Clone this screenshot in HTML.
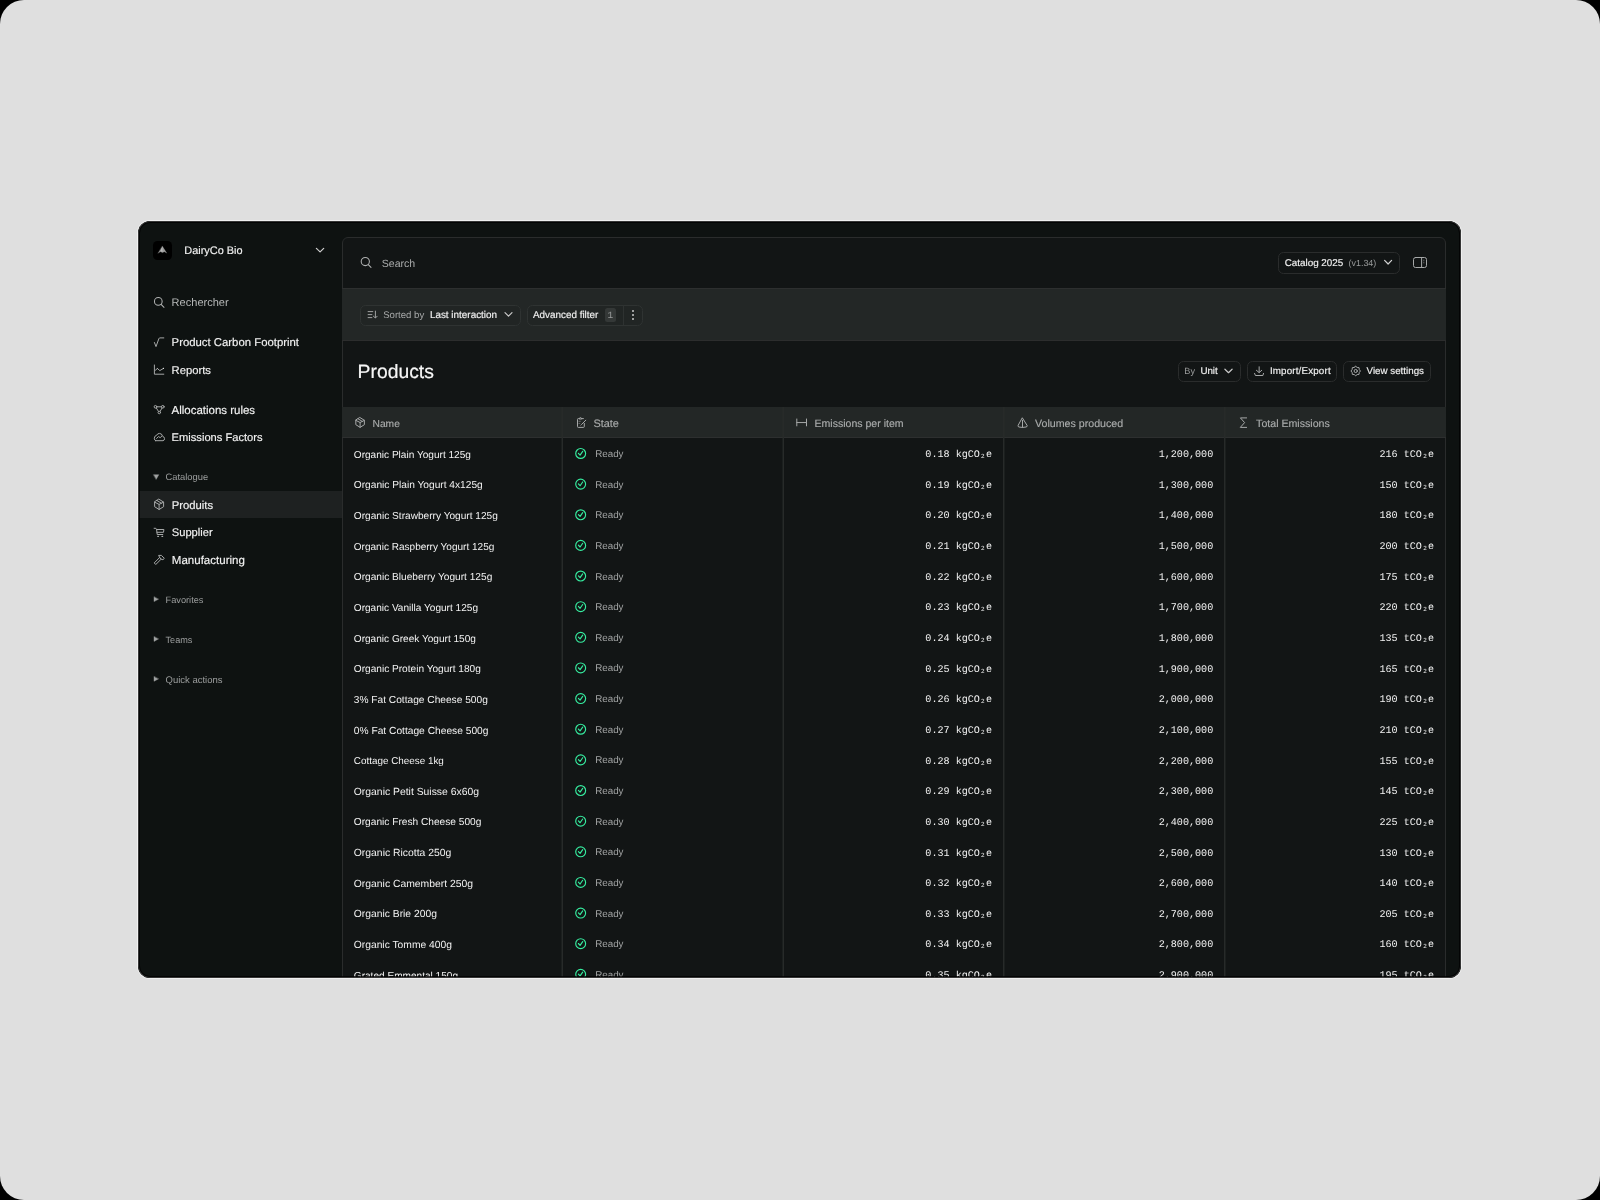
<!DOCTYPE html>
<html><head><meta charset="utf-8"><title>Products</title>
<style>
html,body{margin:0;padding:0;width:1600px;height:1200px;overflow:hidden;background:#000}
.bg{position:absolute;left:0;top:0;width:1600px;height:1200px;background:#dfdfdf;border-radius:24px;overflow:hidden}
.win{will-change:transform;position:absolute;left:138px;top:221px;width:1323px;height:757px;background:#0e1211;border-radius:12px;overflow:hidden;box-shadow:0 0 0 1px #f0f0f0}
.edge{position:absolute;left:0;top:0;width:1323px;height:757px;border-radius:12px;box-shadow:inset 0 0 0 1px rgba(60,60,60,0.9), inset 0 0 0 2px rgba(0,0,0,0.75);z-index:5}
.win > *{position:absolute}
.in{position:absolute;left:-138px;top:-221px;width:1600px;height:1200px}
.in > *{position:absolute}
.t{font-family:"Liberation Sans",sans-serif;white-space:nowrap;text-rendering:geometricPrecision}
.m{-webkit-text-stroke:0.15px currentColor}
.mono{font-family:"Liberation Mono",monospace}
.mb{}
.ic{overflow:visible}
.panel{background:#121515;border:1px solid #2a2c2c;border-radius:6px 6px 0 0;box-sizing:border-box}
.btn{border:1px solid #2a2c2c;border-radius:5.5px;box-sizing:border-box;background:#121515}
.btn2{border:1px solid #2f3332;border-radius:5.5px;box-sizing:border-box;background:#212524}
.dot{width:2.2px;height:2.2px;border-radius:50%;background:#c8c8c8}
</style></head>
<body>
<div class="bg">
<div class="win"><div class="in">
<div class="box" style="left:153px;top:241px;width:19px;height:19px;background:#000;border-radius:4.5px"></div>
<svg class="ic" style="left:155px;top:243px;width:15px;height:14px" viewBox="155 243 15 14" fill="none" stroke="#a6a8a8" stroke-width="1" stroke-linecap="round" stroke-linejoin="round"><path d="M162.45 246.3 L166.7 253.1 L164.5 251.7 L162.45 252.6 L160.4 251.7 L158.2 253.1 Z" fill="#9a9a9a" stroke="#9a9a9a" stroke-width="0.3"/><path d="M162.45 246.3 L160.6 250.6 L162.45 252.4 Z" fill="#b8b8b8" stroke="none"/></svg>
<div class="t m" style="left:184.3px;top:245px;font-size:10.93px;line-height:12px;color:#f2f2f2;">DairyCo Bio</div>
<svg class="ic" style="left:312px;top:244px;width:16px;height:12px" viewBox="312 244 16 12" fill="none" stroke="#c9c9c9" stroke-width="1.25" stroke-linecap="round" stroke-linejoin="round"><path d="M316.4 248.4 L320.1 251.9 L323.7 248.4"/></svg>
<svg class="ic" style="left:150px;top:293px;width:18px;height:18px" viewBox="150 293 18 18" fill="none" stroke="#b0b2b2" stroke-width="1.05" stroke-linecap="round" stroke-linejoin="round"><circle cx="158.3" cy="301.4" r="3.85"/><path d="M161.1 304.3 L164 307.3"/></svg>
<div class="t " style="left:171.6px;top:297px;font-size:11.06px;line-height:12px;color:#b5b7b7;">Rechercher</div>
<svg class="ic" style="left:150px;top:333px;width:18px;height:18px" viewBox="150 333 18 18" fill="none" stroke="#a6a8a8" stroke-width="1" stroke-linecap="round" stroke-linejoin="round"><path d="M154.4 342.5 L156 346.6 L158.9 338.6 Q159.2 337.9 160 337.9 L163.8 337.9"/></svg>
<div class="t m" style="left:171.6px;top:337px;font-size:11.35px;line-height:12px;color:#f2f2f2;">Product Carbon Footprint</div>
<svg class="ic" style="left:150px;top:362px;width:18px;height:18px" viewBox="150 362 18 18" fill="none" stroke="#a6a8a8" stroke-width="1" stroke-linecap="round" stroke-linejoin="round"><path d="M154.4 365 V374.2 H163.8"/><path d="M155.4 370.2 L157.4 368.5 L159.8 370.6 L163.5 368.4"/><circle cx="157.4" cy="368.5" r="0.5" fill="#bbb" stroke="none"/><circle cx="163.5" cy="368.4" r="0.6" fill="#ddd" stroke="none"/></svg>
<div class="t m" style="left:171.6px;top:365px;font-size:11.25px;line-height:12px;color:#f2f2f2;">Reports</div>
<svg class="ic" style="left:150px;top:401px;width:18px;height:18px" viewBox="150 401 18 18" fill="none" stroke="#a6a8a8" stroke-width="1" stroke-linecap="round" stroke-linejoin="round"><circle cx="155.5" cy="406.8" r="1.35"/><circle cx="162.8" cy="406.8" r="1.35"/><circle cx="159.3" cy="412.5" r="1.25"/><path d="M156.9 406.8 H161.4 M156.3 408 L158.5 411.4 M162 408 L160.1 411.4"/></svg>
<div class="t m" style="left:171.6px;top:405px;font-size:11.48px;line-height:12px;color:#f2f2f2;">Allocations rules</div>
<svg class="ic" style="left:150px;top:428px;width:18px;height:18px" viewBox="150 428 18 18" fill="none" stroke="#a6a8a8" stroke-width="1" stroke-linecap="round" stroke-linejoin="round"><path d="M155.6 440.7 H163 Q164.7 440.4 164.5 438.4 Q164.2 436.7 162.6 436.3 Q161.9 433.3 159.4 433.4 Q157.4 433.5 156.6 435.3 Q154.3 435.9 154.3 438.3 Q154.4 440.5 155.6 440.7 Z"/><path d="M156.6 438.4 L158.5 436.6 L160.2 437.6 L161.6 436.5"/></svg>
<div class="t m" style="left:171.6px;top:432px;font-size:11.15px;line-height:12px;color:#f2f2f2;">Emissions Factors</div>
<svg class="ic" style="left:150px;top:470px;width:12px;height:14px" viewBox="150 470 12 14" fill="none" stroke="#a6a8a8" stroke-width="1" stroke-linecap="round" stroke-linejoin="round"><path d="M153.7 474.7 H158.8 L156.25 479.2 Z" fill="#a0a2a2" stroke="#a0a2a2" stroke-width="0.4"/></svg>
<div class="t " style="left:165.5px;top:472px;font-size:9.37px;line-height:10px;color:#9c9e9e;">Catalogue</div>
<div class="box" style="left:138px;top:491px;width:204px;height:27px;background:#1e2121"></div>
<svg class="ic" style="left:152px;top:497px;width:15px;height:15px" viewBox="152 497 15 15" fill="none" stroke="#a6a8a8" stroke-width="1" stroke-linecap="round" stroke-linejoin="round"><path d="M159.1 499.29999999999995 L163.6 502.10499999999996 V506.695 L159.1 509.5 L154.6 506.695 V502.10499999999996 Z"/><path d="M154.6 502.10499999999996 L159.1 504.4 L163.6 502.10499999999996 M159.1 504.4 V509.5 M156.9 500.49999999999994 L161.4 503.205"/></svg>
<div class="t m" style="left:171.8px;top:500px;font-size:11.28px;line-height:12px;color:#f2f2f2;">Produits</div>
<svg class="ic" style="left:150px;top:523px;width:18px;height:18px" viewBox="150 523 18 18" fill="none" stroke="#a6a8a8" stroke-width="1" stroke-linecap="round" stroke-linejoin="round"><path d="M154.1 528.3 H155.8 L156.6 529.5 L157.2 534.5 H162.8"/><path d="M156.6 529.5 H163.9 L163.5 532.3 H157"/><path d="M157.8 536.4 H158.4 M162 536.4 H162.6" stroke-width="1.3"/></svg>
<div class="t m" style="left:171.8px;top:527px;font-size:11.15px;line-height:12px;color:#f2f2f2;">Supplier</div>
<svg class="ic" style="left:150px;top:551px;width:18px;height:18px" viewBox="150 551 18 18" fill="none" stroke="#a6a8a8" stroke-width="1" stroke-linecap="round" stroke-linejoin="round"><path d="M154.5 563.2 L155.8 564.5 L161.2 559.1 L159.9 557.8 Z"/><path d="M159.9 557.8 L158.6 555.4 L161.4 555.4 L164.3 558.4 L162.9 559.7 L161.2 559.1"/></svg>
<div class="t m" style="left:171.8px;top:555px;font-size:11.54px;line-height:12px;color:#f2f2f2;">Manufacturing</div>
<svg class="ic" style="left:150px;top:590px;width:12px;height:15px" viewBox="150 590 12 15" fill="none" stroke="#a6a8a8" stroke-width="1" stroke-linecap="round" stroke-linejoin="round"><path d="M154 597.0 V601.6 L158.3 599.3 Z" fill="#a0a2a2" stroke="#a0a2a2" stroke-width="0.4"/></svg>
<div class="t " style="left:165.5px;top:595px;font-size:9.24px;line-height:10px;color:#9c9e9e;">Favorites</div>
<svg class="ic" style="left:150px;top:630px;width:12px;height:15px" viewBox="150 630 12 15" fill="none" stroke="#a6a8a8" stroke-width="1" stroke-linecap="round" stroke-linejoin="round"><path d="M154 636.8000000000001 V641.4000000000001 L158.3 639.1 Z" fill="#a0a2a2" stroke="#a0a2a2" stroke-width="0.4"/></svg>
<div class="t " style="left:165.5px;top:635px;font-size:9.13px;line-height:10px;color:#9c9e9e;">Teams</div>
<svg class="ic" style="left:150px;top:670px;width:12px;height:15px" viewBox="150 670 12 15" fill="none" stroke="#a6a8a8" stroke-width="1" stroke-linecap="round" stroke-linejoin="round"><path d="M154 676.7 V681.3000000000001 L158.3 679.0 Z" fill="#a0a2a2" stroke="#a0a2a2" stroke-width="0.4"/></svg>
<div class="t " style="left:165.5px;top:675px;font-size:9.5px;line-height:11px;color:#9c9e9e;">Quick actions</div>
<div class="box panel" style="left:342px;top:237px;width:1104px;height:760px"></div>
<svg class="ic" style="left:356px;top:253px;width:20px;height:18px" viewBox="356 253 20 18" fill="none" stroke="#b0b2b2" stroke-width="1.05" stroke-linecap="round" stroke-linejoin="round"><circle cx="365.3" cy="261.5" r="4.1"/><path d="M368.3 264.6 L371 267.4"/></svg>
<div class="t " style="left:381.75px;top:258px;font-size:10.57px;line-height:12px;color:#a9abab;">Search</div>
<div class="box btn" style="left:1278px;top:252px;width:122px;height:21.5px"></div>
<div class="t m" style="left:1284.7px;top:258px;font-size:9.85px;line-height:11px;color:#f2f2f2;">Catalog 2025</div>
<div class="t " style="left:1348.6px;top:258px;font-size:8.9px;line-height:10px;color:#9a9c9c;">(v1.34)</div>
<svg class="ic" style="left:1380px;top:256px;width:16px;height:12px" viewBox="1380 256 16 12" fill="none" stroke="#d0d0d0" stroke-width="1.2" stroke-linecap="round" stroke-linejoin="round"><path d="M1384.6 260.4 L1388.1 264 L1391.6 260.4"/></svg>
<svg class="ic" style="left:1408px;top:252px;width:24px;height:20px" viewBox="1408 252 24 20" fill="none" stroke="#a6a8a8" stroke-width="1" stroke-linecap="round" stroke-linejoin="round"><rect x="1413.5" y="257.5" width="13" height="10" rx="2"/><path d="M1421.6 257.5 V267.5"/><path d="M1423.8 260 V260.8 M1423.8 262.2 V263" stroke-width="0.8" stroke="#777"/></svg>
<div class="box" style="left:342px;top:288px;width:1103.5px;height:53px;background:#232726;border-top:1px solid #2d2f2f;border-bottom:1px solid #2c2d2d;box-sizing:border-box"></div>
<div class="box btn2" style="left:360px;top:304.5px;width:161px;height:21px"></div>
<svg class="ic" style="left:364px;top:306px;width:18px;height:18px" viewBox="364 306 18 18" fill="none" stroke="#9fa1a1" stroke-width="1" stroke-linecap="round" stroke-linejoin="round"><path d="M368.1 311.6 H372.8 M368.1 314.6 H371.9 M368.1 317.6 H371.9"/><path d="M375.4 311.1 V317.6 M373.4 316.2 L375.4 318 L377.2 316.2"/></svg>
<div class="t " style="left:383.2px;top:310px;font-size:9.6px;line-height:11px;color:#a6a8a8;">Sorted by</div>
<div class="t m" style="left:429.9px;top:310px;font-size:9.92px;line-height:11px;color:#f2f2f2;">Last interaction</div>
<svg class="ic" style="left:500px;top:308px;width:16px;height:12px" viewBox="500 308 16 12" fill="none" stroke="#c9c9c9" stroke-width="1.2" stroke-linecap="round" stroke-linejoin="round"><path d="M505 312.6 L508.5 316.2 L512 312.6"/></svg>
<div class="box btn2" style="left:527px;top:304.5px;width:115.5px;height:21px"></div>
<div class="t m" style="left:533px;top:310px;font-size:9.9px;line-height:11px;color:#f2f2f2;">Advanced filter</div>
<div class="box" style="left:605px;top:307.7px;width:11px;height:14px;background:#343837;border-radius:2.5px"></div>
<div class="t mono" style="left:607.5px;top:310px;font-size:9.5px;line-height:11px;color:#9a9c9c;">1</div>
<div class="box" style="left:622.5px;top:305px;width:1px;height:20px;background:#2e3231"></div>
<div class="box dot" style="left:631.9px;top:309.6px"></div><div class="box dot" style="left:631.9px;top:313.9px"></div><div class="box dot" style="left:631.9px;top:318.2px"></div>
<div class="t " style="left:357.6px;top:362px;font-size:19.33px;line-height:21px;color:#f7f7f7;-webkit-text-stroke:0.2px #f7f7f7">Products</div>
<div class="box btn" style="left:1178px;top:360.5px;width:62.5px;height:21px"></div>
<div class="t " style="left:1184.3px;top:366px;font-size:9.17px;line-height:10px;color:#9a9c9c;">By</div>
<div class="t m" style="left:1200.4px;top:366px;font-size:9.78px;line-height:11px;color:#f2f2f2;">Unit</div>
<svg class="ic" style="left:1220px;top:364px;width:16px;height:12px" viewBox="1220 364 16 12" fill="none" stroke="#c9c9c9" stroke-width="1.2" stroke-linecap="round" stroke-linejoin="round"><path d="M1224.9 369.2 L1228.5 372.7 L1232.1 369.2"/></svg>
<div class="box btn" style="left:1247px;top:360.5px;width:90px;height:21px"></div>
<svg class="ic" style="left:1250px;top:362px;width:18px;height:18px" viewBox="1250 362 18 18" fill="none" stroke="#a6a8a8" stroke-width="1" stroke-linecap="round" stroke-linejoin="round"><path d="M1259.15 366.8 V372.3 M1256.4 370.3 L1259.15 372.6 L1261.7 370.3"/><path d="M1254.6 373.4 L1255.4 375.5 H1262.9 L1263.5 373.4"/></svg>
<div class="t m" style="left:1269.9px;top:366px;font-size:9.8px;line-height:11px;color:#f2f2f2;letter-spacing:0.16px">Import/Export</div>
<div class="box btn" style="left:1343.3px;top:360.5px;width:87.4px;height:21px"></div>
<svg class="ic" style="left:1347px;top:362px;width:18px;height:18px" viewBox="1347 362 18 18" fill="none" stroke="#a6a8a8" stroke-width="1" stroke-linecap="round" stroke-linejoin="round"><path d="M1355.70 366.25 L1357.17 367.44 L1359.06 367.64 L1359.26 369.53 L1360.45 371.00 L1359.26 372.47 L1359.06 374.36 L1357.17 374.56 L1355.70 375.75 L1354.23 374.56 L1352.34 374.36 L1352.14 372.47 L1350.95 371.00 L1352.14 369.53 L1352.34 367.64 L1354.23 367.44 Z"/><circle cx="1355.7" cy="371" r="1.6"/></svg>
<div class="t m" style="left:1366.6px;top:366px;font-size:9.77px;line-height:11px;color:#f2f2f2;">View settings</div>
<div class="box" style="left:342px;top:407px;width:1103.5px;height:31px;background:#232726;border-bottom:1px solid #2d2f2f;box-sizing:border-box"></div>
<div class="box" style="left:562px;top:407px;width:1px;height:570px;background:#272a29"></div>
<div class="box" style="left:561px;top:407px;width:1px;height:570px;background:rgba(40,44,43,0.45)"></div>
<div class="box" style="left:783px;top:407px;width:1px;height:570px;background:#272a29"></div>
<div class="box" style="left:782px;top:407px;width:1px;height:570px;background:rgba(40,44,43,0.45)"></div>
<div class="box" style="left:1003px;top:407px;width:1px;height:570px;background:#272a29"></div>
<div class="box" style="left:1004px;top:407px;width:1px;height:570px;background:rgba(40,44,43,0.45)"></div>
<div class="box" style="left:1224px;top:407px;width:1px;height:570px;background:#272a29"></div>
<div class="box" style="left:1225px;top:407px;width:1px;height:570px;background:rgba(40,44,43,0.45)"></div>
<svg class="ic" style="left:353px;top:415px;width:15px;height:15px" viewBox="353 415 15 15" fill="none" stroke="#a6a8a8" stroke-width="1" stroke-linecap="round" stroke-linejoin="round"><path d="M360.1 417.655 L364.375 420.31975 V424.68025 L360.1 427.345 L355.82500000000005 424.68025 V420.31975 Z"/><path d="M355.82500000000005 420.31975 L360.1 422.5 L364.375 420.31975 M360.1 422.5 V427.345 M358.01000000000005 418.79499999999996 L362.285 421.36475"/></svg>
<div class="t m" style="left:372.5px;top:419px;font-size:10.25px;line-height:11px;color:#a9abab;">Name</div>
<svg class="ic" style="left:572px;top:414px;width:18px;height:18px" viewBox="572 414 18 18" fill="none" stroke="#a6a8a8" stroke-width="1" stroke-linecap="round" stroke-linejoin="round"><path d="M578.8 418.6 H578.3 Q577.5 418.6 577.5 419.4 V426.6 Q577.5 427.4 578.3 427.4 H583.5 Q584.3 427.4 584.3 426.6 V423.4"/><path d="M579.2 418.6 Q579.4 417.6 580.4 417.6 Q581.5 417.6 581.7 418.6 Z"/><path d="M582.2 418.6 H583.4"/><path d="M585.8 420.2 L581.4 424.6 L580.9 425.1"/><path d="M578.9 421.3 H580.3 M578.9 423.4 H579.8" stroke="#6a6c6c"/></svg>
<div class="t m" style="left:593.5px;top:418px;font-size:10.9px;line-height:12px;color:#a9abab;">State</div>
<svg class="ic" style="left:792px;top:414px;width:18px;height:18px" viewBox="792 414 18 18" fill="none" stroke="#a6a8a8" stroke-width="1" stroke-linecap="round" stroke-linejoin="round"><path d="M796.8 419 V425.9 M806.5 419 V425.9 M796.8 422.55 H806.5"/></svg>
<div class="t m" style="left:814.5px;top:418px;font-size:10.55px;line-height:12px;color:#a9abab;">Emissions per item</div>
<svg class="ic" style="left:1014px;top:414px;width:18px;height:18px" viewBox="1014 414 18 18" fill="none" stroke="#a6a8a8" stroke-width="1" stroke-linecap="round" stroke-linejoin="round"><path d="M1022.5 418.1 L1027.2 425.6 Q1027.6 426.6 1026 427 Q1022.5 427.9 1019 427 Q1017.5 426.6 1018 425.6 Z"/><path d="M1022.5 420.3 V427.3"/></svg>
<div class="t m" style="left:1035px;top:418px;font-size:10.65px;line-height:12px;color:#a9abab;">Volumes produced</div>
<svg class="ic" style="left:1234px;top:414px;width:18px;height:18px" viewBox="1234 414 18 18" fill="none" stroke="#a6a8a8" stroke-width="1" stroke-linecap="round" stroke-linejoin="round"><path d="M1246.6 417.9 H1240.4 L1244.6 422.6 L1240.3 427.4 H1246.6"/></svg>
<div class="t m" style="left:1256.1px;top:418px;font-size:10.62px;line-height:12px;color:#a9abab;">Total Emissions</div>
<div class="t " style="left:353.8px;top:450px;font-size:10.09px;line-height:11px;color:#f2f2f2;">Organic Plain Yogurt 125g</div>
<svg class="ic" style="left:572px;top:445px;width:18px;height:17px" viewBox="572 445 18 17" fill="none" stroke="#36eda0" stroke-width="1.15" stroke-linecap="round" stroke-linejoin="round"><circle cx="580.67" cy="453.47" r="4.95"/><path d="M578.4 453.27000000000004 L580.1 455.07000000000005 L582.7 451.32000000000005"/></svg>
<div class="t " style="left:595.2px;top:449px;font-size:9.8px;line-height:11px;color:#a2a4a4;">Ready</div>
<div class="t mono mb" style="right:608px;top:450px;font-size:10.1px;line-height:11px;color:#f2f2f2;">0.18 kgCO₂e</div>
<div class="t mono mb" style="right:386.79999999999995px;top:450px;font-size:10.1px;line-height:11px;color:#f2f2f2;">1,200,000</div>
<div class="t mono mb" style="right:166px;top:450px;font-size:10.1px;line-height:11px;color:#f2f2f2;">216 tCO₂e</div>
<div class="t " style="left:353.8px;top:480px;font-size:10.19px;line-height:11px;color:#f2f2f2;">Organic Plain Yogurt 4x125g</div>
<svg class="ic" style="left:572px;top:476px;width:18px;height:17px" viewBox="572 476 18 17" fill="none" stroke="#36eda0" stroke-width="1.15" stroke-linecap="round" stroke-linejoin="round"><circle cx="580.67" cy="484.11" r="4.95"/><path d="M578.4 483.91 L580.1 485.71000000000004 L582.7 481.96000000000004"/></svg>
<div class="t " style="left:595.2px;top:480px;font-size:9.8px;line-height:11px;color:#a2a4a4;">Ready</div>
<div class="t mono mb" style="right:608px;top:481px;font-size:10.1px;line-height:11px;color:#f2f2f2;">0.19 kgCO₂e</div>
<div class="t mono mb" style="right:386.79999999999995px;top:481px;font-size:10.1px;line-height:11px;color:#f2f2f2;">1,300,000</div>
<div class="t mono mb" style="right:166px;top:481px;font-size:10.1px;line-height:11px;color:#f2f2f2;">150 tCO₂e</div>
<div class="t " style="left:353.8px;top:511px;font-size:10.13px;line-height:11px;color:#f2f2f2;">Organic Strawberry Yogurt 125g</div>
<svg class="ic" style="left:572px;top:506px;width:18px;height:17px" viewBox="572 506 18 17" fill="none" stroke="#36eda0" stroke-width="1.15" stroke-linecap="round" stroke-linejoin="round"><circle cx="580.67" cy="514.75" r="4.95"/><path d="M578.4 514.55 L580.1 516.35 L582.7 512.6"/></svg>
<div class="t " style="left:595.2px;top:510px;font-size:9.8px;line-height:11px;color:#a2a4a4;">Ready</div>
<div class="t mono mb" style="right:608px;top:511px;font-size:10.1px;line-height:11px;color:#f2f2f2;">0.20 kgCO₂e</div>
<div class="t mono mb" style="right:386.79999999999995px;top:511px;font-size:10.1px;line-height:11px;color:#f2f2f2;">1,400,000</div>
<div class="t mono mb" style="right:166px;top:511px;font-size:10.1px;line-height:11px;color:#f2f2f2;">180 tCO₂e</div>
<div class="t " style="left:353.8px;top:542px;font-size:10.04px;line-height:11px;color:#f2f2f2;">Organic Raspberry Yogurt 125g</div>
<svg class="ic" style="left:572px;top:537px;width:18px;height:17px" viewBox="572 537 18 17" fill="none" stroke="#36eda0" stroke-width="1.15" stroke-linecap="round" stroke-linejoin="round"><circle cx="580.67" cy="545.39" r="4.95"/><path d="M578.4 545.1899999999999 L580.1 546.99 L582.7 543.24"/></svg>
<div class="t " style="left:595.2px;top:541px;font-size:9.8px;line-height:11px;color:#a2a4a4;">Ready</div>
<div class="t mono mb" style="right:608px;top:542px;font-size:10.1px;line-height:11px;color:#f2f2f2;">0.21 kgCO₂e</div>
<div class="t mono mb" style="right:386.79999999999995px;top:542px;font-size:10.1px;line-height:11px;color:#f2f2f2;">1,500,000</div>
<div class="t mono mb" style="right:166px;top:542px;font-size:10.1px;line-height:11px;color:#f2f2f2;">200 tCO₂e</div>
<div class="t " style="left:353.8px;top:572px;font-size:10.13px;line-height:11px;color:#f2f2f2;">Organic Blueberry Yogurt 125g</div>
<svg class="ic" style="left:572px;top:568px;width:18px;height:17px" viewBox="572 568 18 17" fill="none" stroke="#36eda0" stroke-width="1.15" stroke-linecap="round" stroke-linejoin="round"><circle cx="580.67" cy="576.03" r="4.95"/><path d="M578.4 575.8299999999999 L580.1 577.63 L582.7 573.88"/></svg>
<div class="t " style="left:595.2px;top:572px;font-size:9.8px;line-height:11px;color:#a2a4a4;">Ready</div>
<div class="t mono mb" style="right:608px;top:573px;font-size:10.1px;line-height:11px;color:#f2f2f2;">0.22 kgCO₂e</div>
<div class="t mono mb" style="right:386.79999999999995px;top:573px;font-size:10.1px;line-height:11px;color:#f2f2f2;">1,600,000</div>
<div class="t mono mb" style="right:166px;top:573px;font-size:10.1px;line-height:11px;color:#f2f2f2;">175 tCO₂e</div>
<div class="t " style="left:353.8px;top:603px;font-size:10.08px;line-height:11px;color:#f2f2f2;">Organic Vanilla Yogurt 125g</div>
<svg class="ic" style="left:572px;top:598px;width:18px;height:17px" viewBox="572 598 18 17" fill="none" stroke="#36eda0" stroke-width="1.15" stroke-linecap="round" stroke-linejoin="round"><circle cx="580.67" cy="606.67" r="4.95"/><path d="M578.4 606.4699999999999 L580.1 608.27 L582.7 604.52"/></svg>
<div class="t " style="left:595.2px;top:602px;font-size:9.8px;line-height:11px;color:#a2a4a4;">Ready</div>
<div class="t mono mb" style="right:608px;top:603px;font-size:10.1px;line-height:11px;color:#f2f2f2;">0.23 kgCO₂e</div>
<div class="t mono mb" style="right:386.79999999999995px;top:603px;font-size:10.1px;line-height:11px;color:#f2f2f2;">1,700,000</div>
<div class="t mono mb" style="right:166px;top:603px;font-size:10.1px;line-height:11px;color:#f2f2f2;">220 tCO₂e</div>
<div class="t " style="left:353.8px;top:634px;font-size:10.08px;line-height:11px;color:#f2f2f2;">Organic Greek Yogurt 150g</div>
<svg class="ic" style="left:572px;top:629px;width:18px;height:17px" viewBox="572 629 18 17" fill="none" stroke="#36eda0" stroke-width="1.15" stroke-linecap="round" stroke-linejoin="round"><circle cx="580.67" cy="637.31" r="4.95"/><path d="M578.4 637.1099999999999 L580.1 638.91 L582.7 635.16"/></svg>
<div class="t " style="left:595.2px;top:633px;font-size:9.8px;line-height:11px;color:#a2a4a4;">Ready</div>
<div class="t mono mb" style="right:608px;top:634px;font-size:10.1px;line-height:11px;color:#f2f2f2;">0.24 kgCO₂e</div>
<div class="t mono mb" style="right:386.79999999999995px;top:634px;font-size:10.1px;line-height:11px;color:#f2f2f2;">1,800,000</div>
<div class="t mono mb" style="right:166px;top:634px;font-size:10.1px;line-height:11px;color:#f2f2f2;">135 tCO₂e</div>
<div class="t " style="left:353.8px;top:664px;font-size:10.12px;line-height:11px;color:#f2f2f2;">Organic Protein Yogurt 180g</div>
<svg class="ic" style="left:572px;top:659px;width:18px;height:17px" viewBox="572 659 18 17" fill="none" stroke="#36eda0" stroke-width="1.15" stroke-linecap="round" stroke-linejoin="round"><circle cx="580.67" cy="667.95" r="4.95"/><path d="M578.4 667.75 L580.1 669.5500000000001 L582.7 665.8000000000001"/></svg>
<div class="t " style="left:595.2px;top:663px;font-size:9.8px;line-height:11px;color:#a2a4a4;">Ready</div>
<div class="t mono mb" style="right:608px;top:665px;font-size:10.1px;line-height:11px;color:#f2f2f2;">0.25 kgCO₂e</div>
<div class="t mono mb" style="right:386.79999999999995px;top:665px;font-size:10.1px;line-height:11px;color:#f2f2f2;">1,900,000</div>
<div class="t mono mb" style="right:166px;top:665px;font-size:10.1px;line-height:11px;color:#f2f2f2;">165 tCO₂e</div>
<div class="t " style="left:353.8px;top:695px;font-size:10.19px;line-height:11px;color:#f2f2f2;">3% Fat Cottage Cheese 500g</div>
<svg class="ic" style="left:572px;top:690px;width:18px;height:17px" viewBox="572 690 18 17" fill="none" stroke="#36eda0" stroke-width="1.15" stroke-linecap="round" stroke-linejoin="round"><circle cx="580.67" cy="698.59" r="4.95"/><path d="M578.4 698.39 L580.1 700.19 L582.7 696.44"/></svg>
<div class="t " style="left:595.2px;top:694px;font-size:9.8px;line-height:11px;color:#a2a4a4;">Ready</div>
<div class="t mono mb" style="right:608px;top:695px;font-size:10.1px;line-height:11px;color:#f2f2f2;">0.26 kgCO₂e</div>
<div class="t mono mb" style="right:386.79999999999995px;top:695px;font-size:10.1px;line-height:11px;color:#f2f2f2;">2,000,000</div>
<div class="t mono mb" style="right:166px;top:695px;font-size:10.1px;line-height:11px;color:#f2f2f2;">190 tCO₂e</div>
<div class="t " style="left:353.8px;top:726px;font-size:10.22px;line-height:11px;color:#f2f2f2;">0% Fat Cottage Cheese 500g</div>
<svg class="ic" style="left:572px;top:721px;width:18px;height:17px" viewBox="572 721 18 17" fill="none" stroke="#36eda0" stroke-width="1.15" stroke-linecap="round" stroke-linejoin="round"><circle cx="580.67" cy="729.23" r="4.95"/><path d="M578.4 729.03 L580.1 730.83 L582.7 727.08"/></svg>
<div class="t " style="left:595.2px;top:725px;font-size:9.8px;line-height:11px;color:#a2a4a4;">Ready</div>
<div class="t mono mb" style="right:608px;top:726px;font-size:10.1px;line-height:11px;color:#f2f2f2;">0.27 kgCO₂e</div>
<div class="t mono mb" style="right:386.79999999999995px;top:726px;font-size:10.1px;line-height:11px;color:#f2f2f2;">2,100,000</div>
<div class="t mono mb" style="right:166px;top:726px;font-size:10.1px;line-height:11px;color:#f2f2f2;">210 tCO₂e</div>
<div class="t " style="left:353.8px;top:756px;font-size:9.89px;line-height:11px;color:#f2f2f2;">Cottage Cheese 1kg</div>
<svg class="ic" style="left:572px;top:751px;width:18px;height:17px" viewBox="572 751 18 17" fill="none" stroke="#36eda0" stroke-width="1.15" stroke-linecap="round" stroke-linejoin="round"><circle cx="580.67" cy="759.87" r="4.95"/><path d="M578.4 759.67 L580.1 761.47 L582.7 757.72"/></svg>
<div class="t " style="left:595.2px;top:755px;font-size:9.8px;line-height:11px;color:#a2a4a4;">Ready</div>
<div class="t mono mb" style="right:608px;top:757px;font-size:10.1px;line-height:11px;color:#f2f2f2;">0.28 kgCO₂e</div>
<div class="t mono mb" style="right:386.79999999999995px;top:757px;font-size:10.1px;line-height:11px;color:#f2f2f2;">2,200,000</div>
<div class="t mono mb" style="right:166px;top:757px;font-size:10.1px;line-height:11px;color:#f2f2f2;">155 tCO₂e</div>
<div class="t " style="left:353.8px;top:787px;font-size:10.38px;line-height:11px;color:#f2f2f2;">Organic Petit Suisse 6x60g</div>
<svg class="ic" style="left:572px;top:782px;width:18px;height:17px" viewBox="572 782 18 17" fill="none" stroke="#36eda0" stroke-width="1.15" stroke-linecap="round" stroke-linejoin="round"><circle cx="580.67" cy="790.51" r="4.95"/><path d="M578.4 790.31 L580.1 792.11 L582.7 788.36"/></svg>
<div class="t " style="left:595.2px;top:786px;font-size:9.8px;line-height:11px;color:#a2a4a4;">Ready</div>
<div class="t mono mb" style="right:608px;top:787px;font-size:10.1px;line-height:11px;color:#f2f2f2;">0.29 kgCO₂e</div>
<div class="t mono mb" style="right:386.79999999999995px;top:787px;font-size:10.1px;line-height:11px;color:#f2f2f2;">2,300,000</div>
<div class="t mono mb" style="right:166px;top:787px;font-size:10.1px;line-height:11px;color:#f2f2f2;">145 tCO₂e</div>
<div class="t " style="left:353.8px;top:817px;font-size:10.17px;line-height:11px;color:#f2f2f2;">Organic Fresh Cheese 500g</div>
<svg class="ic" style="left:572px;top:813px;width:18px;height:17px" viewBox="572 813 18 17" fill="none" stroke="#36eda0" stroke-width="1.15" stroke-linecap="round" stroke-linejoin="round"><circle cx="580.67" cy="821.15" r="4.95"/><path d="M578.4 820.9499999999999 L580.1 822.75 L582.7 819.0"/></svg>
<div class="t " style="left:595.2px;top:817px;font-size:9.8px;line-height:11px;color:#a2a4a4;">Ready</div>
<div class="t mono mb" style="right:608px;top:818px;font-size:10.1px;line-height:11px;color:#f2f2f2;">0.30 kgCO₂e</div>
<div class="t mono mb" style="right:386.79999999999995px;top:818px;font-size:10.1px;line-height:11px;color:#f2f2f2;">2,400,000</div>
<div class="t mono mb" style="right:166px;top:818px;font-size:10.1px;line-height:11px;color:#f2f2f2;">225 tCO₂e</div>
<div class="t " style="left:353.8px;top:848px;font-size:10.39px;line-height:11px;color:#f2f2f2;">Organic Ricotta 250g</div>
<svg class="ic" style="left:572px;top:843px;width:18px;height:17px" viewBox="572 843 18 17" fill="none" stroke="#36eda0" stroke-width="1.15" stroke-linecap="round" stroke-linejoin="round"><circle cx="580.67" cy="851.79" r="4.95"/><path d="M578.4 851.5899999999999 L580.1 853.39 L582.7 849.64"/></svg>
<div class="t " style="left:595.2px;top:847px;font-size:9.8px;line-height:11px;color:#a2a4a4;">Ready</div>
<div class="t mono mb" style="right:608px;top:849px;font-size:10.1px;line-height:11px;color:#f2f2f2;">0.31 kgCO₂e</div>
<div class="t mono mb" style="right:386.79999999999995px;top:849px;font-size:10.1px;line-height:11px;color:#f2f2f2;">2,500,000</div>
<div class="t mono mb" style="right:166px;top:849px;font-size:10.1px;line-height:11px;color:#f2f2f2;">130 tCO₂e</div>
<div class="t " style="left:353.8px;top:879px;font-size:10.36px;line-height:11px;color:#f2f2f2;">Organic Camembert 250g</div>
<svg class="ic" style="left:572px;top:874px;width:18px;height:17px" viewBox="572 874 18 17" fill="none" stroke="#36eda0" stroke-width="1.15" stroke-linecap="round" stroke-linejoin="round"><circle cx="580.67" cy="882.43" r="4.95"/><path d="M578.4 882.2299999999999 L580.1 884.03 L582.7 880.28"/></svg>
<div class="t " style="left:595.2px;top:878px;font-size:9.8px;line-height:11px;color:#a2a4a4;">Ready</div>
<div class="t mono mb" style="right:608px;top:879px;font-size:10.1px;line-height:11px;color:#f2f2f2;">0.32 kgCO₂e</div>
<div class="t mono mb" style="right:386.79999999999995px;top:879px;font-size:10.1px;line-height:11px;color:#f2f2f2;">2,600,000</div>
<div class="t mono mb" style="right:166px;top:879px;font-size:10.1px;line-height:11px;color:#f2f2f2;">140 tCO₂e</div>
<div class="t " style="left:353.8px;top:909px;font-size:10.32px;line-height:11px;color:#f2f2f2;">Organic Brie 200g</div>
<svg class="ic" style="left:572px;top:905px;width:18px;height:17px" viewBox="572 905 18 17" fill="none" stroke="#36eda0" stroke-width="1.15" stroke-linecap="round" stroke-linejoin="round"><circle cx="580.67" cy="913.07" r="4.95"/><path d="M578.4 912.87 L580.1 914.6700000000001 L582.7 910.9200000000001"/></svg>
<div class="t " style="left:595.2px;top:909px;font-size:9.8px;line-height:11px;color:#a2a4a4;">Ready</div>
<div class="t mono mb" style="right:608px;top:910px;font-size:10.1px;line-height:11px;color:#f2f2f2;">0.33 kgCO₂e</div>
<div class="t mono mb" style="right:386.79999999999995px;top:910px;font-size:10.1px;line-height:11px;color:#f2f2f2;">2,700,000</div>
<div class="t mono mb" style="right:166px;top:910px;font-size:10.1px;line-height:11px;color:#f2f2f2;">205 tCO₂e</div>
<div class="t " style="left:353.8px;top:940px;font-size:10.29px;line-height:11px;color:#f2f2f2;">Organic Tomme 400g</div>
<svg class="ic" style="left:572px;top:935px;width:18px;height:17px" viewBox="572 935 18 17" fill="none" stroke="#36eda0" stroke-width="1.15" stroke-linecap="round" stroke-linejoin="round"><circle cx="580.67" cy="943.71" r="4.95"/><path d="M578.4 943.51 L580.1 945.3100000000001 L582.7 941.5600000000001"/></svg>
<div class="t " style="left:595.2px;top:939px;font-size:9.8px;line-height:11px;color:#a2a4a4;">Ready</div>
<div class="t mono mb" style="right:608px;top:940px;font-size:10.1px;line-height:11px;color:#f2f2f2;">0.34 kgCO₂e</div>
<div class="t mono mb" style="right:386.79999999999995px;top:940px;font-size:10.1px;line-height:11px;color:#f2f2f2;">2,800,000</div>
<div class="t mono mb" style="right:166px;top:940px;font-size:10.1px;line-height:11px;color:#f2f2f2;">160 tCO₂e</div>
<div class="t " style="left:353.8px;top:971px;font-size:10.08px;line-height:11px;color:#f2f2f2;">Grated Emmental 150g</div>
<svg class="ic" style="left:572px;top:966px;width:18px;height:17px" viewBox="572 966 18 17" fill="none" stroke="#36eda0" stroke-width="1.15" stroke-linecap="round" stroke-linejoin="round"><circle cx="580.67" cy="974.35" r="4.95"/><path d="M578.4 974.15 L580.1 975.95 L582.7 972.2"/></svg>
<div class="t " style="left:595.2px;top:970px;font-size:9.8px;line-height:11px;color:#a2a4a4;">Ready</div>
<div class="t mono mb" style="right:608px;top:971px;font-size:10.1px;line-height:11px;color:#f2f2f2;">0.35 kgCO₂e</div>
<div class="t mono mb" style="right:386.79999999999995px;top:971px;font-size:10.1px;line-height:11px;color:#f2f2f2;">2,900,000</div>
<div class="t mono mb" style="right:166px;top:971px;font-size:10.1px;line-height:11px;color:#f2f2f2;">195 tCO₂e</div>
</div><div class="edge"></div></div>
</div>
</body></html>
